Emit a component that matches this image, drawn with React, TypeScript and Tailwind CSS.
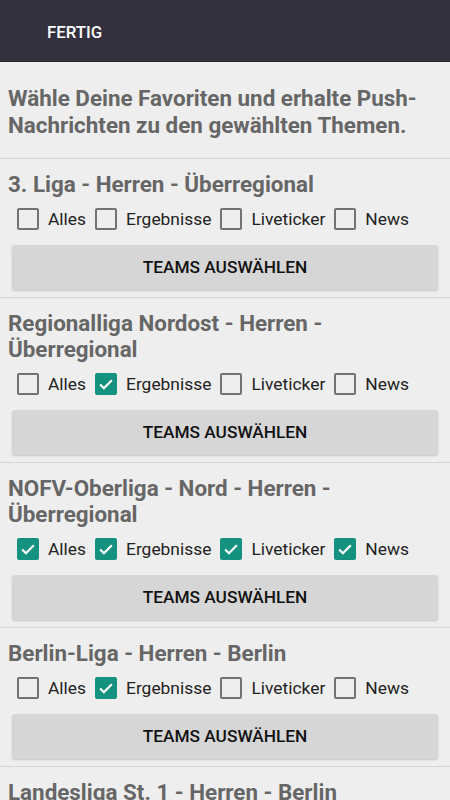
type Section = {
  title: string;
  checked: [boolean, boolean, boolean, boolean];
};

const labels = ['Alles', 'Ergebnisse', 'Liveticker', 'News'];

const sections: Section[] = [
  { title: '3. Liga - Herren - Überregional', checked: [false, false, false, false] },
  { title: 'Regionalliga Nordost - Herren - Überregional', checked: [false, true, false, false] },
  { title: 'NOFV-Oberliga - Nord - Herren - Überregional', checked: [true, true, true, true] },
  { title: 'Berlin-Liga - Herren - Berlin', checked: [false, true, false, false] },
  { title: 'Landesliga St. 1 - Herren - Berlin', checked: [false, false, false, false] },
];

function CheckBox({ checked }: { checked: boolean }) {
  if (checked) {
    return (
      <span className="flex h-[22px] w-[22px] shrink-0 items-center justify-center rounded-[2px] bg-[#15927f]">
        <svg viewBox="0 0 24 24" className="h-[20px] w-[20px]" fill="none" stroke="white" strokeWidth="2.6">
          <path d="M5 12.5l4.5 4.5L19 7.5" />
        </svg>
      </span>
    );
  }
  return <span className="h-[22px] w-[22px] shrink-0 rounded-[2px] border-2 border-[#737373]" />;
}

export default function App() {
  return (
    <div className="h-[800px] overflow-hidden bg-[#eeeeee] font-['Roboto',sans-serif]">
      <div className="flex h-[62px] items-center border-b border-[#25232e] bg-[#34313f] pt-[4px] pl-[47px]">
        <span className="text-[16.8px] font-medium text-white">FERTIG</span>
      </div>

      <div className="border-b border-[#d6d6d6] px-2 pt-[23px] pb-[19px]">
        <p className="text-[22.4px] leading-[27px] font-bold text-[#666666]">
          Wähle Deine Favoriten und erhalte Push-Nachrichten zu den gewählten Themen.
        </p>
      </div>

      {sections.map((section) => (
        <div key={section.title} className="border-b border-[#d6d6d6] px-2 pt-[12px] pb-[7px]">
          <h2 className="text-[22.4px] leading-[26px] font-bold whitespace-nowrap text-[#666666]">
            {section.title.includes('Nord') ? (
              <>
                {section.title.replace(' Überregional', '')}
                <br />
                Überregional
              </>
            ) : (
              section.title
            )}
          </h2>
          <div className="mt-[4px] flex h-[36px] items-center pl-[9px]">
            {labels.map((label, i) => (
              <div key={label} className="flex items-center gap-[9px] pr-[9px]">
                <CheckBox checked={section.checked[i]} />
                <span className="text-[17.4px] text-[#222222]">{label}</span>
              </div>
            ))}
          </div>
          <button
            type="button"
            className="mx-1 mt-[8px] flex h-[45px] w-[426px] items-center justify-center rounded-[3px] bg-[#d6d6d6] text-[17.3px] font-medium text-[#111111] shadow-[0_1px_2px_rgba(0,0,0,0.18)]"
          >
            TEAMS AUSWÄHLEN
          </button>
        </div>
      ))}
    </div>
  );
}
